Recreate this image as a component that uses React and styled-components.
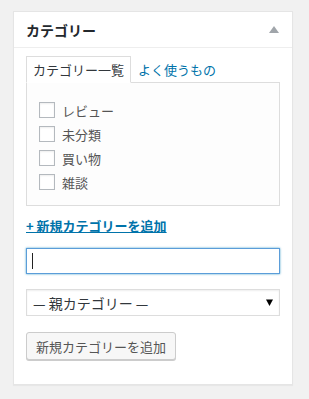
import React, { useState } from 'react';
import styled, { createGlobalStyle } from 'styled-components';

const GlobalStyle = createGlobalStyle`
  html, body {
    margin: 0;
    padding: 0;
    background: #f1f1f1;
  }
  body {
    font-family: "Noto Sans CJK JP", "Noto Sans", sans-serif;
    font-size: 13px;
    color: #444;
  }
`;

const categories = ['レビュー', '未分類', '買い物', '雑談'];

const App = () => {
  const [tab, setTab] = useState('all');
  const [checked, setChecked] = useState({});
  const [name, setName] = useState('');

  return (
    <>
      <GlobalStyle />
      <Page>
        <Box>
          <Header>
            <Title>カテゴリー</Title>
            <Toggle aria-label="toggle">
              <svg width="10" height="7" viewBox="0 0 10 7">
                <path d="M5 0 L10 7 L0 7 Z" fill="#a0a5aa" />
              </svg>
            </Toggle>
          </Header>
          <Inside>
            <Tabs>
              <Tab $active={tab === 'all'} onClick={() => setTab('all')}>カテゴリー一覧</Tab>
              <Tab $active={tab === 'pop'} onClick={() => setTab('pop')}>よく使うもの</Tab>
            </Tabs>
            <Panel>
              <List>
                {categories.map((c) => (
                  <Item key={c}>
                    <Check
                      type="checkbox"
                      checked={!!checked[c]}
                      onChange={() => setChecked({ ...checked, [c]: !checked[c] })}
                    />
                    {c}
                  </Item>
                ))}
              </List>
            </Panel>
            <AddLink href="#">+ 新規カテゴリーを追加</AddLink>
            <InputWrap>
              <TextInput value={name} onChange={(e) => setName(e.target.value)} />
              {!name && <Caret />}
            </InputWrap>
            <SelectBox>
              <span>— 親カテゴリー —</span>
              <svg width="7" height="7" viewBox="0 0 7 7">
                <path d="M0 0.5 L7 0.5 L3.5 7 Z" fill="#000" />
              </svg>
            </SelectBox>
            <Button>新規カテゴリーを追加</Button>
          </Inside>
        </Box>
      </Page>
    </>
  );
};

const Page = styled.div`
  padding: 11px 16px 15px 13px;
`;

const Box = styled.div`
  background: #fff;
  border: 1px solid #e5e5e5;
  box-shadow: 0 1px 1px rgba(0, 0, 0, 0.04);
`;

const Header = styled.div`
  display: flex;
  align-items: center;
  justify-content: space-between;
  height: 35px;
  padding: 0 13px 0 12px;
  border-bottom: 1px solid #eee;
`;

const Title = styled.h2`
  margin: 0;
  font-size: 14px;
  font-weight: 700;
  color: #23282d;
`;

const Toggle = styled.span`
  display: flex;
  align-items: center;
  margin-top: -1px;
`;

const Inside = styled.div`
  display: flex;
  flex-direction: column;
  align-items: flex-start;
  padding: 8px 12px 24px 12px;
`;

const Tabs = styled.div`
  display: flex;
  align-items: flex-end;
  position: relative;
  z-index: 1;
  margin-bottom: -1px;
`;

const Tab = styled.div`
  height: 27px;
  box-sizing: border-box;
  padding: 0 6px;
  display: flex;
  align-items: center;
  line-height: 1;
  cursor: pointer;
  border: 1px solid ${(p) => (p.$active ? '#ddd' : 'transparent')};
  border-bottom-color: ${(p) => (p.$active ? '#fff' : 'transparent')};
  background: ${(p) => (p.$active ? '#fff' : 'transparent')};
  color: ${(p) => (p.$active ? '#32373c' : '#0073aa')};
`;

const Panel = styled.div`
  align-self: stretch;
  box-sizing: border-box;
  height: 124px;
  border: 1px solid #ddd;
  background: #fdfdfd;
  padding: 19px 12px 0 12px;
`;

const List = styled.ul`
  list-style: none;
  margin: 0;
  padding: 0;
  display: flex;
  flex-direction: column;
  gap: 8px;
`;

const Item = styled.li`
  display: flex;
  align-items: center;
  height: 16px;
  gap: 7px;
  color: #555;
  line-height: 1;
`;

const Check = styled.input`
  appearance: none;
  margin: 0;
  width: 16px;
  height: 16px;
  border: 1px solid #b4b9be;
  background: #fff;
  box-shadow: inset 0 1px 2px rgba(0, 0, 0, 0.07);
  box-sizing: border-box;
  &:checked {
    background: #1e8cbe;
  }
`;

const AddLink = styled.a`
  margin-top: 11px;
  font-weight: 700;
  color: #0073aa;
  text-decoration: underline;
  line-height: 18px;
`;

const InputWrap = styled.div`
  position: relative;
  margin-top: 13px;
  align-self: stretch;
  display: flex;
`;

const TextInput = styled.input`
  flex: 1;
  box-sizing: border-box;
  height: 26px;
  border: 1px solid #5b9dd9;
  box-shadow: 0 0 2px rgba(30, 140, 190, 0.8);
  outline: none;
  padding: 3px 6px;
  font-family: inherit;
  font-size: 14px;
  caret-color: #333;
`;

const Caret = styled.span`
  position: absolute;
  left: 6px;
  top: 5px;
  width: 1px;
  height: 16px;
  background: #222;
  pointer-events: none;
`;

const SelectBox = styled.div`
  margin-top: 15px;
  align-self: stretch;
  box-sizing: border-box;
  height: 27px;
  border: 1px solid #ddd;
  background: #fff;
  box-shadow: inset 0 1px 2px rgba(0, 0, 0, 0.07);
  display: flex;
  align-items: center;
  justify-content: space-between;
  padding: 0 6px 0 6px;
  font-size: 14px;
  color: #32373c;
`;

const Button = styled.button`
  margin-top: 16px;
  height: 28px;
  padding: 0 9px;
  border: 1px solid #ccc;
  border-radius: 3px;
  background: #f7f7f7;
  box-shadow: 0 1px 0 #ccc;
  font-family: inherit;
  font-size: 13px;
  color: #555;
  cursor: pointer;
`;

export default App;
